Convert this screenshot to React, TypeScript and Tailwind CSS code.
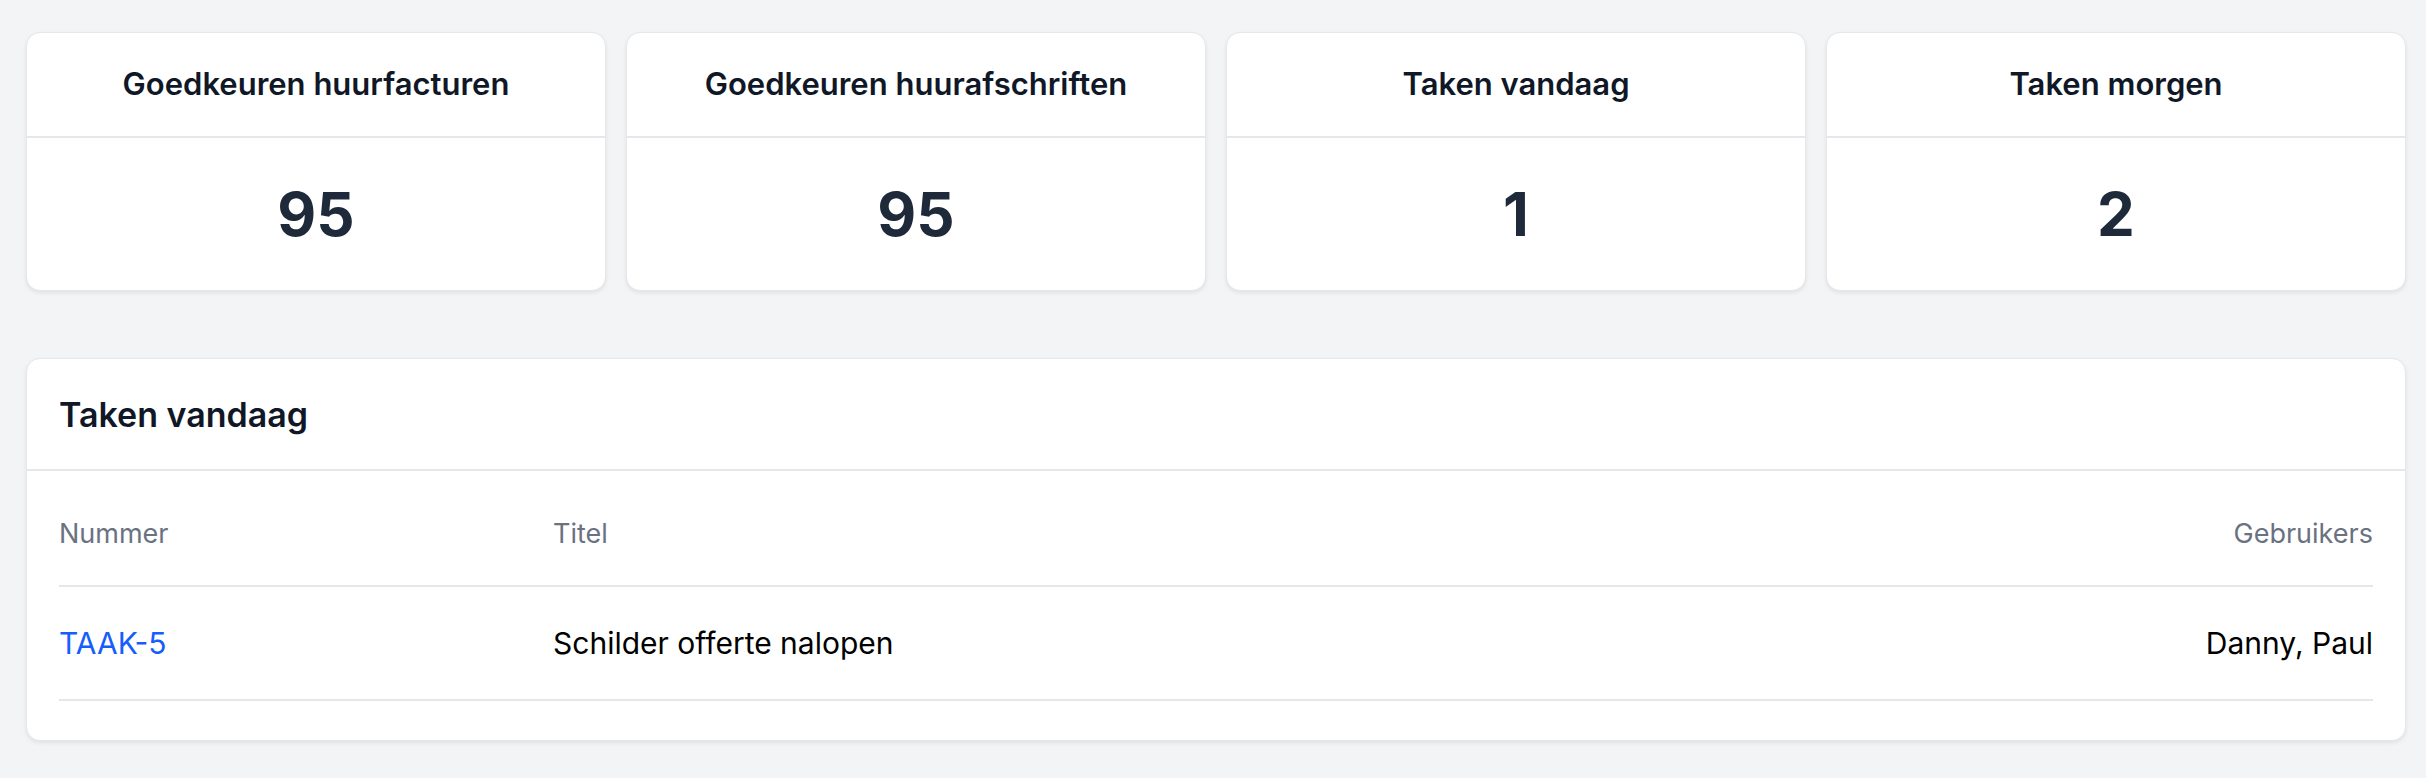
const stats = [
  { title: 'Goedkeuren huurfacturen', value: 95 },
  { title: 'Goedkeuren huurafschriften', value: 95 },
  { title: 'Taken vandaag', value: 1 },
  { title: 'Taken morgen', value: 2 },
];

const tasks = [
  { id: 'TAAK-5', title: 'Schilder offerte nalopen', users: 'Danny, Paul' },
];

function StatCard({ title, value }: { title: string; value: number }) {
  return (
    <div className="rounded-[14px] border border-gray-200 bg-white shadow-[0_2px_4px_rgba(0,0,0,0.08)]">
      <div className="flex h-[105px] items-center justify-center border-b-2 border-gray-200 text-[31px] font-semibold text-gray-900">
        {title}
      </div>
      <div className="flex h-[152px] items-center justify-center text-[60px] font-bold leading-none text-gray-800">
        {value}
      </div>
    </div>
  );
}

export default function App() {
  return (
    <div
      className="min-h-screen bg-[#f3f4f6] pb-10 pl-[26px] pr-[20px] pt-[32px]"
      style={{ fontFamily: 'Inter, "Noto Sans", sans-serif' }}
    >
      <div className="grid grid-cols-4 gap-5">
        {stats.map((s) => (
          <StatCard key={s.title} title={s.title} value={s.value} />
        ))}
      </div>

      <div className="mt-[67px] rounded-[14px] border border-gray-200 bg-white shadow-[0_2px_4px_rgba(0,0,0,0.08)]">
        <div className="flex h-[112px] items-center border-b-2 border-gray-200 px-8 text-[34px] font-semibold text-gray-900">
          Taken vandaag
        </div>
        <div className="px-8 pb-[39px]">
          <table className="w-full border-collapse">
            <thead>
              <tr className="border-b-2 border-gray-200">
                <th className="h-[115px] w-[494px] pt-[12px] text-left align-middle text-[27px] font-normal text-gray-500">Nummer</th>
                <th className="h-[115px] pt-[12px] text-left align-middle text-[27px] font-normal text-gray-500">Titel</th>
                <th className="h-[115px] pt-[12px] text-right align-middle text-[27px] font-normal text-gray-500">Gebruikers</th>
              </tr>
            </thead>
            <tbody>
              {tasks.map((t) => (
                <tr key={t.id} className="border-b-2 border-gray-200">
                  <td className="h-[114px] align-middle text-[30px] text-blue-600">
                    <a href="#">{t.id}</a>
                  </td>
                  <td className="h-[114px] align-middle text-[30px] text-black">{t.title}</td>
                  <td className="h-[114px] text-right align-middle text-[30px] text-black">{t.users}</td>
                </tr>
              ))}
            </tbody>
          </table>
        </div>
      </div>
    </div>
  );
}
